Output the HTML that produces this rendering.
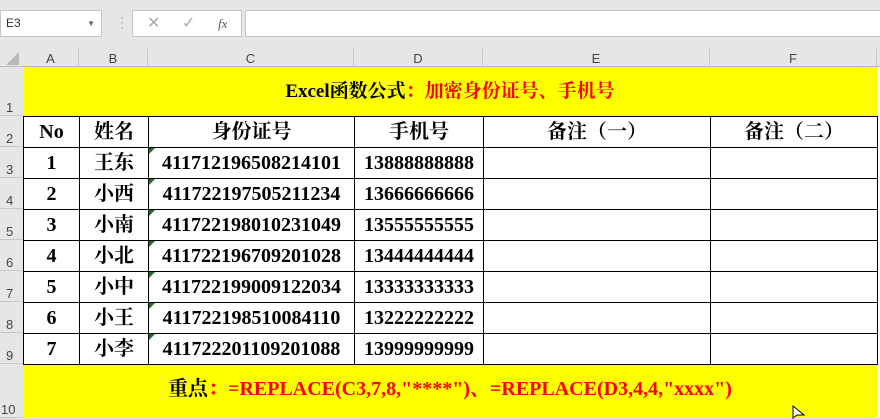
<!DOCTYPE html>
<html><head><meta charset="utf-8"><style>
*{margin:0;padding:0;box-sizing:border-box}
body{width:880px;height:418px;overflow:hidden;background:#e6e6e6;position:relative;font-family:"Liberation Sans",sans-serif}
.a{position:absolute}
.box{background:#fff;border:1px solid #c6c6c6}
.ch{position:absolute;top:49px;height:18px;font-size:13px;color:#444;text-align:center;line-height:20px;border-right:1px solid #c8c8c8}
.rh{position:absolute;left:0;width:23px;font-size:13px;color:#444;text-align:left;padding-left:6px;border-bottom:1px solid #c8c8c8;display:flex;align-items:flex-end}
.s{font-family:"Liberation Serif","Noto Serif CJK SC",serif;font-weight:bold;color:#000}
table{position:absolute;left:23px;top:116px;border-collapse:collapse}
td{border:1.5px solid #000;height:31px;text-align:center;font-size:20px;padding:0;background:#fff;position:relative;line-height:28px}
td.t::before{content:"";position:absolute;left:0;top:0;border-top:6px solid #1e6b2e;border-right:6px solid transparent}
</style></head><body>
<div class="a box" style="left:0;top:10px;width:102px;height:27px;font-size:12px;line-height:25px;padding-left:5px;color:#333">E3<span style="position:absolute;right:6px;top:0;font-size:8px;color:#666">▼</span></div>
<div class="a" style="left:115px;top:14px;color:#aaa;font-size:14px">⋮</div>
<div class="a box" style="left:132px;top:10px;width:110px;height:27px;color:#aaa;font-size:16px;line-height:25px"><span style="position:absolute;left:14px">✕</span><span style="position:absolute;left:49px">✓</span><span style="position:absolute;left:85px;font-family:'Liberation Serif',serif;font-style:italic;font-size:13px;color:#555">fx</span></div>
<div class="a box" style="left:245px;top:10px;width:640px;height:27px"></div>
<div class="a" style="left:0;top:49px;width:880px;height:18px;background:#e6e6e6;border-bottom:1px solid #bbb"></div>
<div class="a" style="left:6px;top:52px;width:0;height:0;border-left:13px solid transparent;border-bottom:13px solid #b8b8b8"></div>
<div class="ch" style="left:23px;width:56px">A</div>
<div class="ch" style="left:79px;width:69px">B</div>
<div class="ch" style="left:148px;width:206px">C</div>
<div class="ch" style="left:354px;width:129px">D</div>
<div class="ch" style="left:483px;width:227px">E</div>
<div class="ch" style="left:710px;width:167px">F</div>
<div class="rh" style="top:67px;height:49px">1</div>
<div class="rh" style="top:116px;height:31px">2</div>
<div class="rh" style="top:147px;height:31px">3</div>
<div class="rh" style="top:178px;height:31px">4</div>
<div class="rh" style="top:209px;height:31px">5</div>
<div class="rh" style="top:240px;height:31px">6</div>
<div class="rh" style="top:271px;height:31px">7</div>
<div class="rh" style="top:302px;height:31px">8</div>
<div class="rh" style="top:333px;height:31px">9</div>
<div class="rh" style="top:364px;height:54px;padding-left:1px">10</div>
<div class="a" style="left:23px;top:67px;width:857px;height:351px;background:#fff"></div>
<div class="a s" style="left:23px;top:67px;width:854px;height:49px;background:#ffff00;font-size:19px;text-align:center;line-height:49px">Excel函数公式<span style="color:#f00">：加密身份证号、手机号</span></div>
<div class="a s" style="left:23px;top:364px;width:854px;height:54px;background:#ffff00;font-size:20px;text-align:center;line-height:50px">重点<span style="color:#f00">：=REPLACE(C3,7,8,"****")、=REPLACE(D3,4,4,"xxxx")</span></div>
<table class="s">
<tr><td style="width:56px">No</td><td style="width:69px">姓名</td><td style="width:206px">身份证号</td><td style="width:129px">手机号</td><td style="width:227px">备注（一）</td><td style="width:167px">备注（二）</td></tr>
<tr><td>1</td><td>王东</td><td class="t">411712196508214101</td><td>13888888888</td><td></td><td></td></tr>
<tr><td>2</td><td>小西</td><td class="t">411722197505211234</td><td>13666666666</td><td></td><td></td></tr>
<tr><td>3</td><td>小南</td><td class="t">411722198010231049</td><td>13555555555</td><td></td><td></td></tr>
<tr><td>4</td><td>小北</td><td class="t">411722196709201028</td><td>13444444444</td><td></td><td></td></tr>
<tr><td>5</td><td>小中</td><td class="t">411722199009122034</td><td>13333333333</td><td></td><td></td></tr>
<tr><td>6</td><td>小王</td><td class="t">411722198510084110</td><td>13222222222</td><td></td><td></td></tr>
<tr><td>7</td><td>小李</td><td class="t">411722201109201088</td><td>13999999999</td><td></td><td></td></tr>
</table>
<svg class="a" style="left:792px;top:405px" width="14" height="14"><path d="M1 1 L1 13 L5 10 L12 10 Z" fill="#fff" stroke="#000"/></svg>
</body></html>
